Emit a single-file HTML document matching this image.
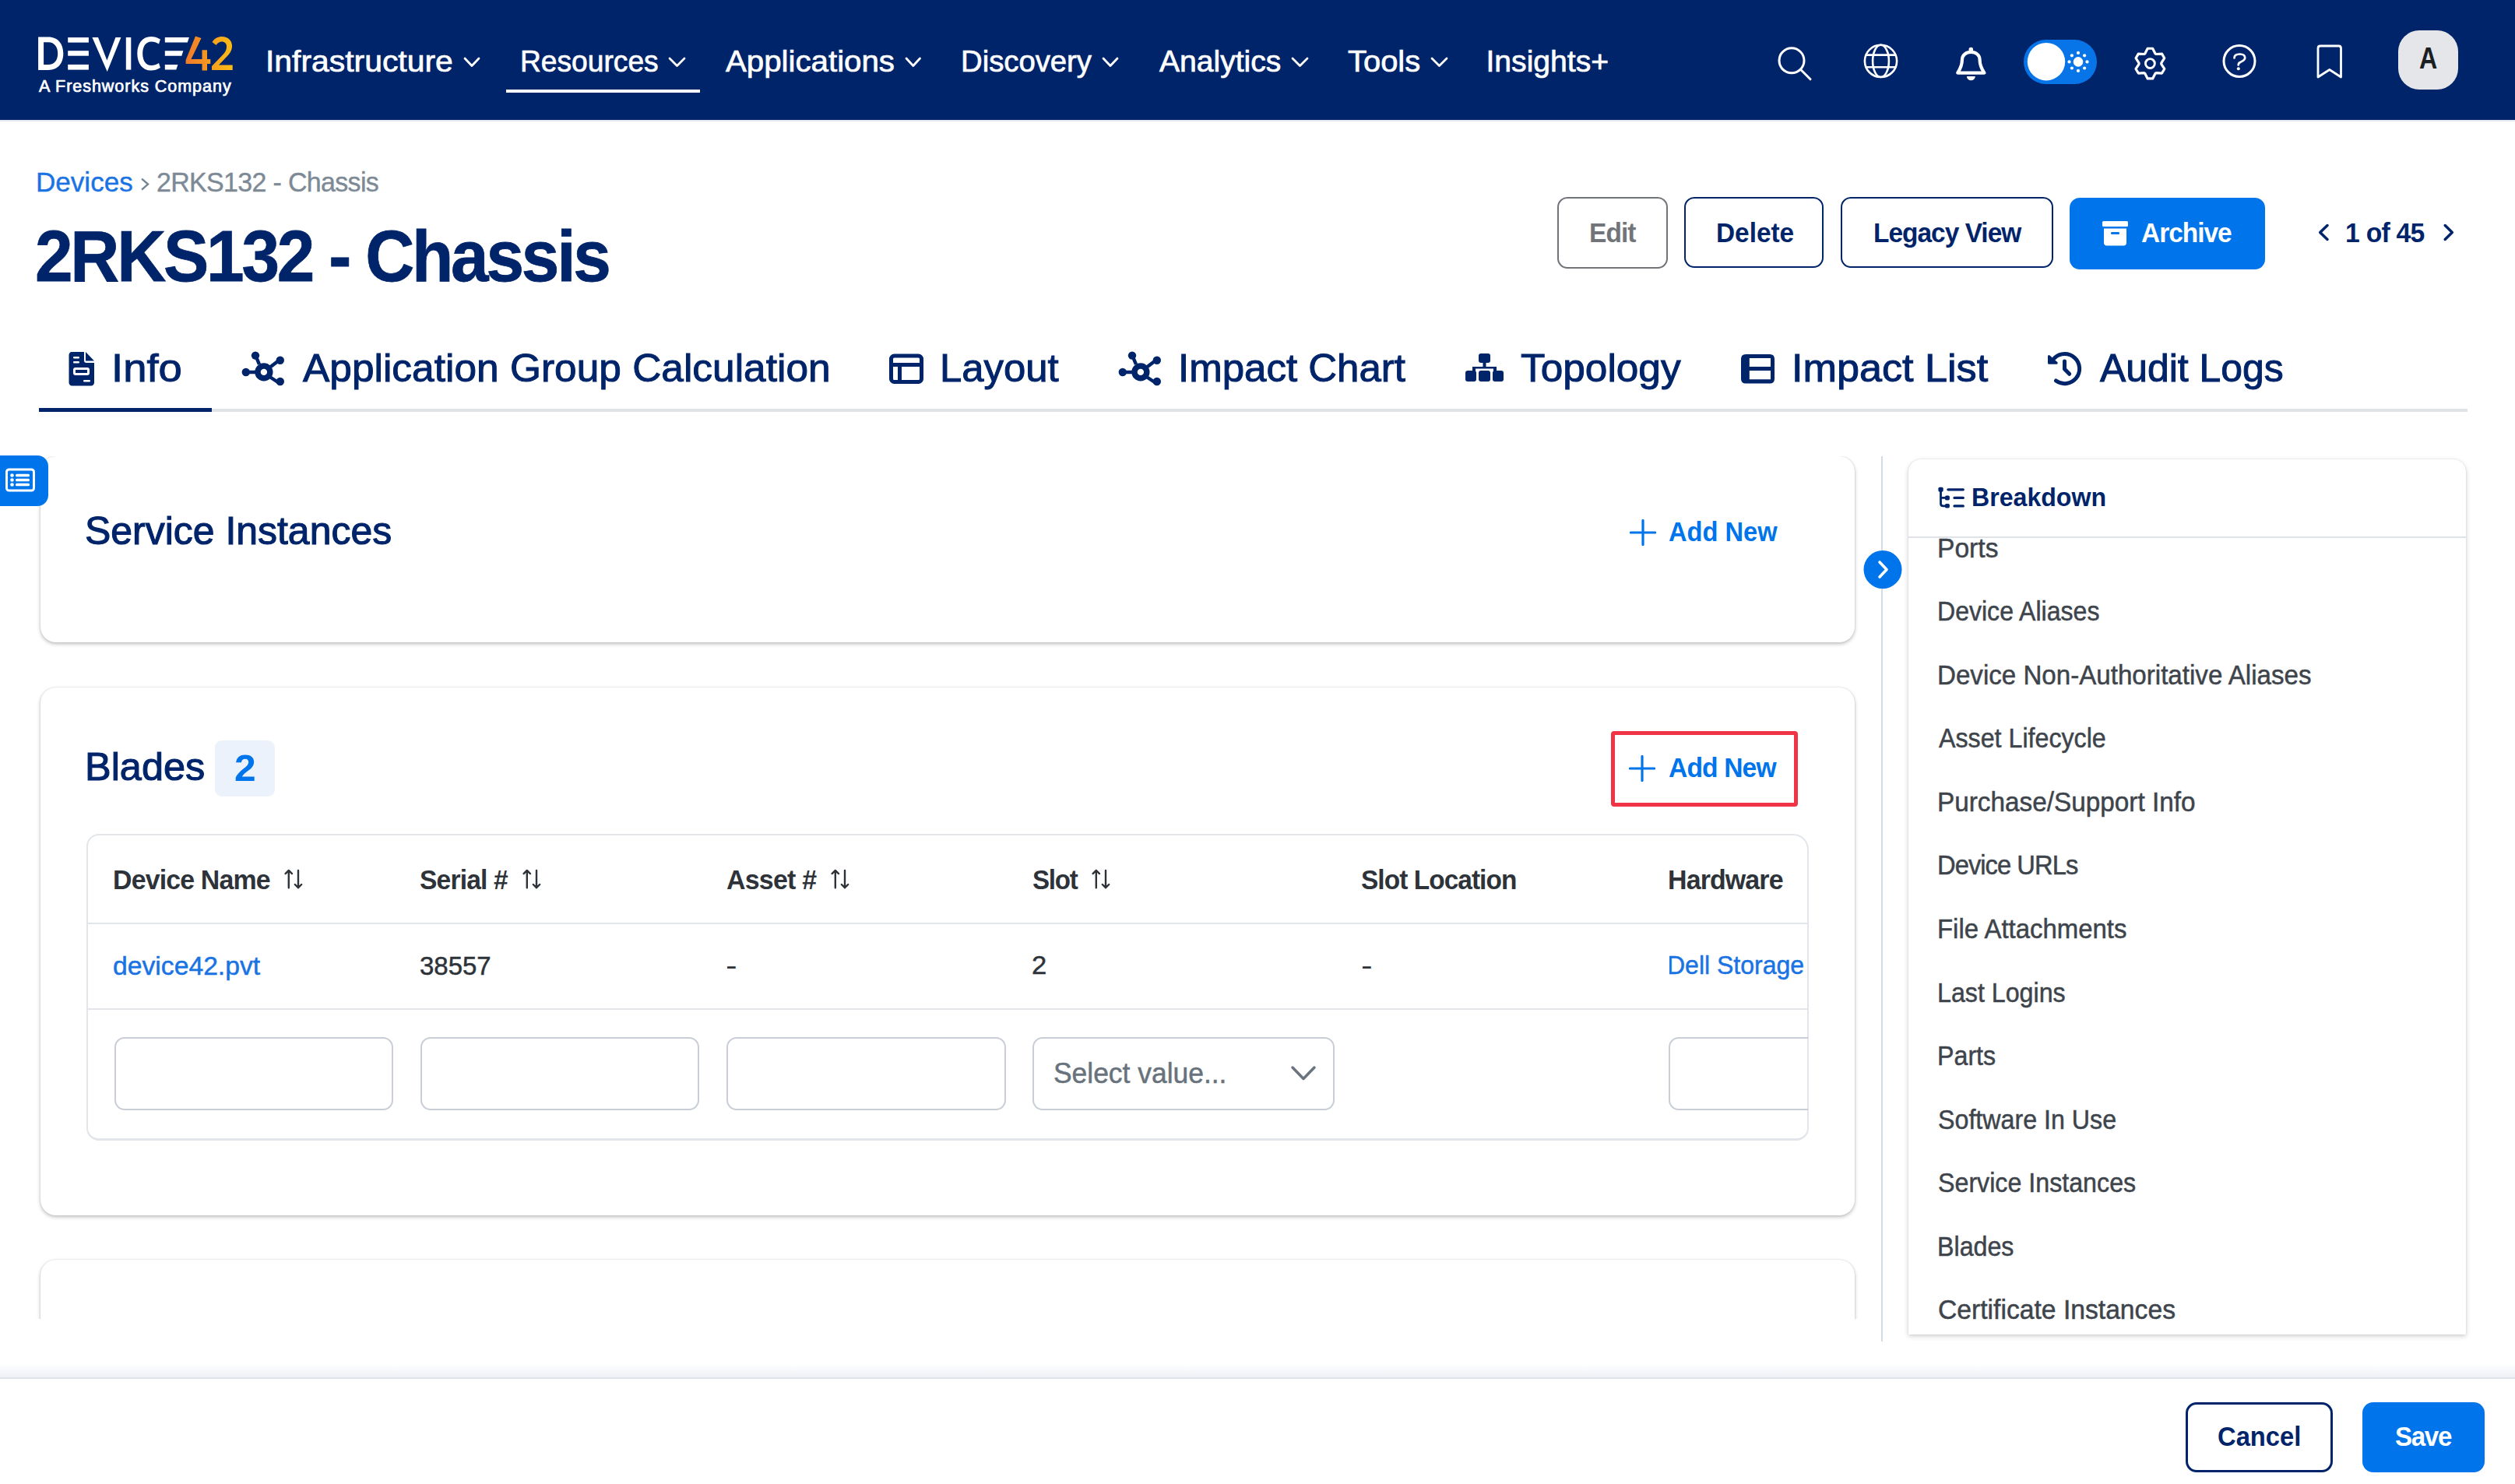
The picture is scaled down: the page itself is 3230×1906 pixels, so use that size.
<!DOCTYPE html>
<html><head><meta charset="utf-8"><title>2RKS132 - Chassis</title>
<style>
html,body{margin:0;padding:0;}
body{width:3230px;height:1906px;position:relative;overflow:hidden;background:#fff;font-family:"Liberation Sans", sans-serif;}
.t{position:absolute;white-space:nowrap;line-height:1;transform-origin:0 0;}
</style></head><body>
<div style="position:absolute;left:0;top:0;width:3230px;height:154px;background:#00246a"></div>
<div style="position:absolute;left:0;top:154px;width:3230px;height:2px;background:#e3e7ee"></div>
<svg style="position:absolute;left:40px;top:40px" width="270" height="90" viewBox="0 0 270 90">
<defs><linearGradient id="og" gradientUnits="userSpaceOnUse" x1="199" x2="259" y1="0" y2="0"><stop offset="0" stop-color="#f07a2a"/><stop offset="1" stop-color="#fbbc14"/></linearGradient></defs>
<g fill="#fff">
<path d="M9.1 7.5 H22 C35 7.5 41.3 17 41.3 28.7 C41.3 40.5 35 49.9 22 49.9 H9.1 Z M16.1 14.3 V43.1 H22 C30 43.1 34.2 37 34.2 28.7 C34.2 20.5 30 14.3 22 14.3 Z"/>
<rect x="47.2" y="8.1" width="26.7" height="6.5"/><rect x="47.2" y="25.2" width="26.7" height="6.5"/><rect x="47.2" y="42.9" width="26.7" height="6.7"/>
<path d="M78.4 8 H86 L97.4 37.5 L108.4 8 H115.4 L97.7 52 Z"/>
<rect x="121.8" y="8" width="6.5" height="41.6"/>
<path d="M165.9 10.5 C162 8 158 7 154 7 C143 7 136.3 16 136.3 28.7 C136.3 41.5 143 50.5 154 50.5 C158 50.5 162 49.5 165.9 47 L164 41 C161 43 158 44 154.5 44 C147 44 143.2 37.5 143.2 28.7 C143.2 20 147 13.5 154.5 13.5 C158 13.5 161 14.5 164 16.5 Z"/>
<path d="M171.8 8.1 H202.9 L200.8 14.6 H171.8 Z"/><path d="M171.8 25.2 H195.4 L193.3 31.7 H171.8 Z"/><path d="M171.8 42.9 H188.4 L186.3 49.6 H171.8 Z"/>
</g>
<g fill="url(#og)">
<path d="M211 6.4 L218.5 9 L205.5 36 H219.5 V24.3 H226 V36 H230.3 V42 H226 V50.5 H219.5 V42 H198.6 V37 Z"/>
<path d="M232.5 14 C235 9.5 240 7 245 7 C253 7 258 12 258 19 C258 25 255 29 250 34 L241 43.5 H258.7 V50 H232 V45 L245.5 31 C249.5 27 251 24 251 19.5 C251 16 248.5 13.5 245 13.5 C242 13.5 239.5 15 237.5 18 Z"/>
</g>
</svg>
<div class="t" style="left:50.0px;top:100.8px;font-size:21.51px;font-weight:400;color:#fff;letter-spacing:0.97px;-webkit-text-stroke:0.7px #fff;">A Freshworks Company</div>
<div class="t" style="left:340.8px;top:59.2px;font-size:39.10px;font-weight:400;color:#fff;transform:scaleX(1.0457);-webkit-text-stroke:0.7px #fff;">Infrastructure</div>
<svg style="position:absolute;left:595.0px;top:72px" width="22.0" height="16" viewBox="0 0 22.0 16"><path d="M2 3 L11.0 12.5 L20.0 3" fill="none" stroke="#fff" stroke-width="2.8" stroke-linecap="round" stroke-linejoin="round"/></svg>
<div class="t" style="left:667.5px;top:59.2px;font-size:39.10px;font-weight:400;color:#fff;transform:scaleX(0.9513);-webkit-text-stroke:0.7px #fff;">Resources</div>
<svg style="position:absolute;left:858.0px;top:72px" width="23.0" height="16" viewBox="0 0 23.0 16"><path d="M2 3 L11.5 12.5 L21.0 3" fill="none" stroke="#fff" stroke-width="2.8" stroke-linecap="round" stroke-linejoin="round"/></svg>
<div class="t" style="left:931.8px;top:59.2px;font-size:39.10px;font-weight:400;color:#fff;transform:scaleX(1.0298);-webkit-text-stroke:0.7px #fff;">Applications</div>
<svg style="position:absolute;left:1162.0px;top:72px" width="21.5" height="16" viewBox="0 0 21.5 16"><path d="M2 3 L10.8 12.5 L19.5 3" fill="none" stroke="#fff" stroke-width="2.8" stroke-linecap="round" stroke-linejoin="round"/></svg>
<div class="t" style="left:1233.9px;top:59.2px;font-size:39.10px;font-weight:400;color:#fff;transform:scaleX(0.9792);-webkit-text-stroke:0.7px #fff;">Discovery</div>
<svg style="position:absolute;left:1415.0px;top:72px" width="22.0" height="16" viewBox="0 0 22.0 16"><path d="M2 3 L11.0 12.5 L20.0 3" fill="none" stroke="#fff" stroke-width="2.8" stroke-linecap="round" stroke-linejoin="round"/></svg>
<div class="t" style="left:1489.0px;top:59.2px;font-size:39.10px;font-weight:400;color:#fff;-webkit-text-stroke:0.7px #fff;">Analytics</div>
<svg style="position:absolute;left:1658.0px;top:72px" width="23.0" height="16" viewBox="0 0 23.0 16"><path d="M2 3 L11.5 12.5 L21.0 3" fill="none" stroke="#fff" stroke-width="2.8" stroke-linecap="round" stroke-linejoin="round"/></svg>
<div class="t" style="left:1731.2px;top:59.2px;font-size:39.10px;font-weight:400;color:#fff;transform:scaleX(1.0210);-webkit-text-stroke:0.7px #fff;">Tools</div>
<svg style="position:absolute;left:1837.0px;top:72px" width="23.0" height="16" viewBox="0 0 23.0 16"><path d="M2 3 L11.5 12.5 L21.0 3" fill="none" stroke="#fff" stroke-width="2.8" stroke-linecap="round" stroke-linejoin="round"/></svg>
<div class="t" style="left:1908.5px;top:59.2px;font-size:39.10px;font-weight:400;color:#fff;-webkit-text-stroke:0.7px #fff;">Insights+</div>
<div style="position:absolute;left:650px;top:115px;width:249px;height:4px;background:#fff"></div>
<svg style="position:absolute;left:2270px;top:45px" width="930" height="70" viewBox="2270 45 930 70">
<g fill="none" stroke="#fff" stroke-width="3" stroke-linecap="round" stroke-linejoin="round">
<circle cx="2301" cy="77.8" r="16"/><path d="M2313.5 90.3 L2325 101.8"/>
<g stroke-width="2.6"><circle cx="2415.5" cy="78.4" r="20.6"/><ellipse cx="2415.5" cy="78.4" rx="10.4" ry="20.6"/><path d="M2397 70.6 H2434 M2397 86.2 H2434"/></g>
<path d="M2514.2 93.6 C2518.5 87 2519.9 83 2519.9 77 C2519.9 70.5 2525 66.9 2531.3 66.9 C2537.6 66.9 2542.6 70.5 2542.6 77 C2542.6 83 2544 87 2548.4 93.6 Z" stroke-width="4.2"/>
<path d="M2754.86 68.77 L2758.17 62.27 L2764.63 62.27 L2767.94 68.77 L2769.24 69.52 L2776.52 69.13 L2779.76 74.74 L2775.78 80.85 L2775.78 82.35 L2779.76 88.46 L2776.52 94.07 L2769.24 93.68 L2767.94 94.43 L2764.63 100.93 L2758.17 100.93 L2754.86 94.43 L2753.56 93.68 L2746.28 94.07 L2743.04 88.46 L2747.02 82.35 L2747.02 80.85 L2743.04 74.74 L2746.28 69.13 L2753.56 69.52 Z" stroke-width="3.2"/>
<circle cx="2761.4" cy="81.6" r="5.95" stroke-width="2.9"/>
<circle cx="2876" cy="78.5" r="20"/>
<path d="M2869.5 74.5 C2869.5 71 2872 69.5 2876.5 69.5 C2881 69.5 2883.2 71.5 2883.2 74.2 C2883.2 77.5 2879.5 78.5 2877 80 C2875 81 2874.7 82 2874.7 83.5" stroke-width="2.7"/>
<path d="M2977 99 V62 Q2977 59 2980 59 H3003.5 Q3006.5 59 3006.5 62 V99 L2991.8 89.5 L2977 99 Z" stroke-width="2.8"/>
</g>
<g fill="#fff">
<circle cx="2531.3" cy="63.6" r="2.8"/><path d="M2525.9 97.9 H2536.8 A5.45 5.45 0 0 1 2525.9 97.9 Z"/>
<circle cx="2874.8" cy="88.3" r="2"/>
</g>
<rect x="2599" y="51" width="94" height="57" rx="28.5" fill="#0774e8"/>
<circle cx="2628" cy="79.2" r="24.2" fill="#fff"/>
<g fill="#fff"><circle cx="2669" cy="79.4" r="6.3"/>
<circle cx="2669" cy="67.9" r="2.1"/><circle cx="2669" cy="90.9" r="2.1"/><circle cx="2657.5" cy="79.4" r="2.1"/><circle cx="2680.5" cy="79.4" r="2.1"/>
<circle cx="2660.9" cy="71.3" r="2.1"/><circle cx="2677.1" cy="71.3" r="2.1"/><circle cx="2660.9" cy="87.5" r="2.1"/><circle cx="2677.1" cy="87.5" r="2.1"/></g>

</svg>
<div style="position:absolute;left:3080px;top:39px;width:77px;height:76px;border-radius:27px;background:#e5e6ea"></div>
<div class="t" style="left:3106.7px;top:56.4px;font-size:38.23px;font-weight:700;color:#1b1f22;transform:scaleX(0.8425);">A</div>
<div class="t" style="left:45.5px;top:215.6px;font-size:35.32px;font-weight:400;color:#1a73e3;transform:scaleX(0.9929);-webkit-text-stroke:0.4px #1a73e3;">Devices</div>
<svg style="position:absolute;left:176px;top:224px" width="20" height="26" viewBox="176 224 20 26"><path d="M183 230.5 L190 236.6 L183 242.8" fill="none" stroke="#748592" stroke-width="2.4" stroke-linecap="square"/></svg>
<div class="t" style="left:201.3px;top:215.6px;font-size:35.32px;font-weight:400;color:#7d8a95;letter-spacing:-0.71px;transform:scaleX(0.9629);-webkit-text-stroke:0.4px #7d8a95;">2RKS132 - Chassis</div>
<div class="t" style="left:45.4px;top:281.9px;font-size:93.46px;font-weight:700;color:#00246a;letter-spacing:-3.44px;transform:scaleX(0.9345);-webkit-text-stroke:0.8px #00246a;">2RKS132 - Chassis</div>
<div style="position:absolute;left:2000px;top:253.2px;width:137.8px;height:87.4px;border:2.6px solid #707378;background:#fff;border-radius:13px"></div>
<div style="position:absolute;left:2162.5px;top:253.2px;width:175.9px;height:87.0px;border:2.8px solid #00246a;background:#fff;border-radius:13px"></div>
<div style="position:absolute;left:2364px;top:253.2px;width:268.9px;height:87.0px;border:2.8px solid #00246a;background:#fff;border-radius:13px"></div>
<div style="position:absolute;left:2658px;top:253.5px;width:251px;height:92px;background:#0074ea;border-radius:13px"></div>
<div class="t" style="left:2040.8px;top:281.2px;font-size:35.17px;font-weight:700;color:#717478;letter-spacing:-1.00px;transform:scaleX(0.9530);">Edit</div>
<div class="t" style="left:2203.8px;top:281.2px;font-size:35.17px;font-weight:700;color:#00246a;transform:scaleX(0.9492);">Delete</div>
<div class="t" style="left:2405.8px;top:281.2px;font-size:35.17px;font-weight:700;color:#00246a;letter-spacing:-1.03px;transform:scaleX(0.9508);">Legacy View</div>
<div class="t" style="left:2750.3px;top:281.2px;font-size:35.17px;font-weight:700;color:#fff;letter-spacing:-1.05px;transform:scaleX(0.9507);">Archive</div>
<svg style="position:absolute;left:2698px;top:283px" width="38" height="34" viewBox="0 0 38 34">
<rect x="2" y="1" width="33" height="7" rx="1.5" fill="#fff"/><path d="M4 10.5 H33 V29 C33 31 31.5 32.5 29.5 32.5 H7.5 C5.5 32.5 4 31 4 29 Z" fill="#fff"/>
<rect x="13" y="15" width="11" height="3" rx="1.2" fill="#0774e8"/></svg>
<div class="t" style="left:3011.5px;top:281.2px;font-size:35.17px;font-weight:700;color:#00246a;letter-spacing:-0.76px;transform:scaleX(0.9581);">1 of 45</div>
<svg style="position:absolute;left:2970px;top:280px" width="190" height="36" viewBox="2970 280 190 36"><g fill="none" stroke="#00246a" stroke-width="3.5" stroke-linecap="round" stroke-linejoin="round"><path d="M2989 289.5 L2979.7 298.5 L2989 307.5"/><path d="M3140.2 289.5 L3149.3 298.5 L3140.2 307.5"/></g></svg>
<div style="position:absolute;left:50px;top:525px;width:3119px;height:4px;background:#dfe2e7"></div>
<div style="position:absolute;left:50px;top:524px;width:222px;height:5px;background:#00246a"></div>
<div class="t" style="left:143.1px;top:447.6px;font-size:50.15px;font-weight:400;color:#00246a;transform:scaleX(1.0861);-webkit-text-stroke:1px #00246a;">Info</div>
<div class="t" style="left:388.5px;top:447.6px;font-size:50.15px;font-weight:400;color:#00246a;transform:scaleX(1.0258);-webkit-text-stroke:1px #00246a;">Application Group Calculation</div>
<div class="t" style="left:1207.4px;top:447.6px;font-size:50.15px;font-weight:400;color:#00246a;transform:scaleX(1.0143);-webkit-text-stroke:1px #00246a;">Layout</div>
<div class="t" style="left:1513.2px;top:447.6px;font-size:50.15px;font-weight:400;color:#00246a;transform:scaleX(1.0171);-webkit-text-stroke:1px #00246a;">Impact Chart</div>
<div class="t" style="left:1953.0px;top:447.6px;font-size:50.15px;font-weight:400;color:#00246a;transform:scaleX(1.0244);-webkit-text-stroke:1px #00246a;">Topology</div>
<div class="t" style="left:2301.0px;top:447.6px;font-size:50.15px;font-weight:400;color:#00246a;transform:scaleX(1.0400);-webkit-text-stroke:1px #00246a;">Impact List</div>
<div class="t" style="left:2697.0px;top:447.6px;font-size:50.15px;font-weight:400;color:#00246a;transform:scaleX(0.9949);-webkit-text-stroke:1px #00246a;">Audit Logs</div>
<svg style="position:absolute;left:80px;top:440px" width="2620" height="70" viewBox="80 440 2620 70">
<g fill="#00246a">
<path d="M92 452 H108 V463 C108 465 109 466 111 466 H121 V491.5 C121 493.8 119.3 495.5 117 495.5 H92.5 C90.2 495.5 88.5 493.8 88.5 491.5 V456 C88.5 453.8 90 452 92 452 Z"/>
<path d="M110 452 L121 463.5 H110 Z"/>
</g>
<g fill="#fff"><rect x="94" y="458" width="8" height="2.6" rx="1.3"/><rect x="94" y="464" width="8" height="2.6" rx="1.3"/>
<rect x="94" y="472" width="21" height="10" rx="3"/><rect x="107" y="488" width="9" height="2.6" rx="1.3"/></g>
<rect x="97" y="475" width="15" height="4" fill="#00246a"/>
<g id="hub"><g stroke="#00246a" stroke-width="4.5" fill="none"><circle cx="338.9" cy="477.9" r="7.9" stroke-width="7.4"/>
<path d="M333 468 L328 456 M347 471.5 L360 461.5 M329.5 478 L315.5 478 M346.5 484 L360 493"/></g>
<g fill="#00246a"><circle cx="328" cy="456.6" r="5.2"/><circle cx="359.8" cy="462.7" r="5.2"/><circle cx="315.8" cy="478" r="5.2"/><circle cx="359.8" cy="490" r="5.2"/></g></g>
<use href="#hub" x="1126" y="0"/>
<g fill="none" stroke="#00246a" stroke-width="5"><rect x="1144.5" y="457" width="39" height="33.5" rx="4"/><path d="M1144.5 468.5 H1183.5 M1155.5 468.5 V490.5"/></g>
<g fill="#00246a"><rect x="1899" y="454" width="15" height="12" rx="3"/><path d="M1904.5 465 H1908.5 V471 H1922 V477 H1918 V473.5 H1895 V477 H1891 V471 H1904.5 Z"/>
<rect x="1882" y="476" width="14" height="14" rx="3"/><rect x="1899" y="476" width="15" height="14" rx="3"/><rect x="1917" y="476" width="14" height="14" rx="3"/></g>
<path fill-rule="evenodd" fill="#00246a" d="M2242 455 H2273 Q2279 455 2279 461 V486.5 Q2279 492.5 2273 492.5 H2242 Q2236 492.5 2236 486.5 V461 Q2236 455 2242 455 Z M2246.8 460 H2274 V471 H2246.8 Z M2246.8 476.1 H2274 V487.3 H2246.8 Z"/>
<g fill="none" stroke="#00246a" stroke-width="5" stroke-linecap="round" stroke-linejoin="round"><path d="M2638.5 459.9 A19 19 0 1 1 2640.5 489"/><path d="M2651.5 464 V474 L2657.7 480.3"/></g>
<path d="M2631.5 457.5 V466.2 H2641.2 Z" fill="#00246a" stroke="#00246a" stroke-width="3" stroke-linejoin="round"/>
</g></svg>
<div style="position:absolute;left:0;top:585px;width:62px;height:65px;background:#0074ea;border-radius:0 14px 14px 0;z-index:5"></div>
<svg style="position:absolute;left:0;top:585px;z-index:6" width="62" height="65" viewBox="0 585 62 65"><rect x="8.5" y="603" width="35" height="27" rx="3" fill="none" stroke="#fff" stroke-width="3"/>
<g fill="#fff"><circle cx="15.5" cy="610.5" r="2.3"/><circle cx="15.5" cy="616.5" r="2.3"/><circle cx="15.5" cy="622.5" r="2.3"/>
<rect x="20" y="608.8" width="18" height="3.4" rx="1.5"/><rect x="20" y="614.8" width="18" height="3.4" rx="1.5"/><rect x="20" y="620.8" width="18" height="3.4" rx="1.5"/></g></svg>
<div style="position:absolute;left:0;top:586px;width:2400px;height:1108px;overflow:hidden">
<div style="position:absolute;left:52px;top:0px;width:2330px;height:238.5px;background:#fff;border-radius:20px;box-shadow:0 2px 5px rgba(0,0,0,0.26), 0 0 2px rgba(0,0,0,0.12);"></div>
<div style="position:absolute;left:52px;top:297px;width:2330px;height:677.5px;background:#fff;border-radius:20px;box-shadow:0 2px 5px rgba(0,0,0,0.26), 0 0 2px rgba(0,0,0,0.12);"></div>
<div style="position:absolute;left:52px;top:1031.7px;width:2330px;height:300px;background:#fff;border-radius:20px;box-shadow:0 2px 5px rgba(0,0,0,0.26), 0 0 2px rgba(0,0,0,0.12);"></div>
</div>
<div class="t" style="left:108.6px;top:657.2px;font-size:49.42px;font-weight:400;color:#00246a;transform:scaleX(1.0107);-webkit-text-stroke:1.1px #00246a;">Service Instances</div>
<svg style="position:absolute;left:2092.5px;top:667px" width="34" height="34" viewBox="0 0 34 34"><path d="M17 1.5 V32.5 M1.5 17 H32.5" stroke="#0074ea" stroke-width="3.2" stroke-linecap="round"/></svg>
<div class="t" style="left:2142.8px;top:665.5px;font-size:34.88px;font-weight:700;color:#0074ea;transform:scaleX(0.9354);">Add New</div>
<div class="t" style="left:109.0px;top:959.9px;font-size:50.87px;font-weight:400;color:#00246a;transform:scaleX(0.9920);-webkit-text-stroke:1.1px #00246a;">Blades</div>
<div style="position:absolute;left:276px;top:951px;width:77px;height:72px;background:#ecf2fb;border-radius:9px"></div>
<div class="t" style="left:300.5px;top:962.0px;font-size:48.40px;font-weight:700;color:#0074ea;transform:scaleX(1.0288);">2</div>
<div style="position:absolute;left:2068.5px;top:939px;width:230.5px;height:87px;border:5px solid #f03345;border-radius:4px"></div>
<svg style="position:absolute;left:2092px;top:970px" width="34" height="34" viewBox="0 0 34 34"><path d="M17 1.5 V32.5 M1.5 17 H32.5" stroke="#0074ea" stroke-width="3.2" stroke-linecap="round"/></svg>
<div class="t" style="left:2143.3px;top:969.2px;font-size:34.88px;font-weight:700;color:#0074ea;letter-spacing:-0.90px;transform:scaleX(0.9637);">Add New</div>
<div style="position:absolute;left:111px;top:1071px;width:2211.7px;height:394px;border:2px solid #e2e5e9;border-bottom-width:3px;border-radius:16px;border-top-right-radius:20px;box-sizing:border-box;overflow:hidden">
</div>
<div style="position:absolute;left:113px;top:1184.5px;width:2209px;height:2px;background:#e2e5e9"></div>
<div style="position:absolute;left:113px;top:1295px;width:2209px;height:2px;background:#e2e5e9"></div>
<div class="t" style="left:144.8px;top:1111.6px;font-size:35.32px;font-weight:700;color:#2d3339;letter-spacing:-0.87px;transform:scaleX(0.9599);">Device Name</div>
<div class="t" style="left:539.2px;top:1111.6px;font-size:35.32px;font-weight:700;color:#2d3339;letter-spacing:-0.87px;transform:scaleX(0.9510);">Serial #</div>
<div class="t" style="left:932.7px;top:1111.6px;font-size:35.32px;font-weight:700;color:#2d3339;letter-spacing:-0.80px;transform:scaleX(0.9613);">Asset #</div>
<div class="t" style="left:1326.0px;top:1111.6px;font-size:35.32px;font-weight:700;color:#2d3339;letter-spacing:-1.37px;transform:scaleX(0.9375);">Slot</div>
<div class="t" style="left:1748.2px;top:1111.6px;font-size:35.32px;font-weight:700;color:#2d3339;letter-spacing:-0.99px;transform:scaleX(0.9461);">Slot Location</div>
<div class="t" style="left:2141.5px;top:1111.6px;font-size:35.32px;font-weight:700;color:#2d3339;letter-spacing:-0.89px;transform:scaleX(0.9603);">Hardware</div>
<svg style="position:absolute;left:355.1px;top:1105px" width="36" height="42" viewBox="0 0 36 42"><g fill="none" stroke="#2d3339" stroke-width="2.4" stroke-linecap="round" stroke-linejoin="round"><path d="M15.8 35.2 V12.9 M11.6 17.1 L15.8 12.9 L20 17.1"/><path d="M28 12.9 V35.2 M23.8 31 L28 35.2 L32.2 31"/></g></svg>
<svg style="position:absolute;left:660.5px;top:1105px" width="36" height="42" viewBox="0 0 36 42"><g fill="none" stroke="#2d3339" stroke-width="2.4" stroke-linecap="round" stroke-linejoin="round"><path d="M15.8 35.2 V12.9 M11.6 17.1 L15.8 12.9 L20 17.1"/><path d="M28 12.9 V35.2 M23.8 31 L28 35.2 L32.2 31"/></g></svg>
<svg style="position:absolute;left:1056.5px;top:1105px" width="36" height="42" viewBox="0 0 36 42"><g fill="none" stroke="#2d3339" stroke-width="2.4" stroke-linecap="round" stroke-linejoin="round"><path d="M15.8 35.2 V12.9 M11.6 17.1 L15.8 12.9 L20 17.1"/><path d="M28 12.9 V35.2 M23.8 31 L28 35.2 L32.2 31"/></g></svg>
<svg style="position:absolute;left:1392.0px;top:1105px" width="36" height="42" viewBox="0 0 36 42"><g fill="none" stroke="#2d3339" stroke-width="2.4" stroke-linecap="round" stroke-linejoin="round"><path d="M15.8 35.2 V12.9 M11.6 17.1 L15.8 12.9 L20 17.1"/><path d="M28 12.9 V35.2 M23.8 31 L28 35.2 L32.2 31"/></g></svg>
<div class="t" style="left:144.7px;top:1223.0px;font-size:34.01px;font-weight:400;color:#1a73e3;transform:scaleX(0.9910);-webkit-text-stroke:0.5px #1a73e3;">device42.pvt</div>
<div class="t" style="left:538.8px;top:1223.0px;font-size:34.01px;font-weight:400;color:#2d3339;transform:scaleX(0.9693);-webkit-text-stroke:0.5px #2d3339;">38557</div>
<div class="t" style="left:932.2px;top:1222.5px;font-size:34.88px;font-weight:400;color:#2d3339;transform:scaleX(1.2613);">-</div>
<div class="t" style="left:1325.1px;top:1223.3px;font-size:33.72px;font-weight:400;color:#2d3339;transform:scaleX(1.0250);-webkit-text-stroke:0.5px #2d3339;">2</div>
<div class="t" style="left:1748.2px;top:1222.5px;font-size:34.88px;font-weight:400;color:#2d3339;transform:scaleX(1.2613);">-</div>
<div style="position:absolute;left:2143.7px;top:1200px;width:178px;height:80px;overflow:hidden"><div class="t" style="left:-2.6px;top:22.4px;font-size:34.01px;font-weight:400;color:#1a73e3;transform:scaleX(0.9413);-webkit-text-stroke:0.5px #1a73e3;">Dell Storage</div></div>
<div style="position:absolute;left:146.8px;top:1331.5px;width:358.2px;height:94.5px;border:2px solid #c9ced6;border-radius:13px;box-sizing:border-box;background:#fff"></div>
<div style="position:absolute;left:540px;top:1331.5px;width:358.3px;height:94.5px;border:2px solid #c9ced6;border-radius:13px;box-sizing:border-box;background:#fff"></div>
<div style="position:absolute;left:933.4px;top:1331.5px;width:358.6px;height:94.5px;border:2px solid #c9ced6;border-radius:13px;box-sizing:border-box;background:#fff"></div>
<div style="position:absolute;left:1326px;top:1331.5px;width:388.0px;height:94.5px;border:2px solid #c9ced6;border-radius:13px;box-sizing:border-box;background:#fff"></div>
<div style="position:absolute;left:2142.8px;top:1331.5px;width:179.7px;height:94.5px;overflow:hidden"><div style="width:300px;height:94.5px;border:2px solid #c9ced6;border-radius:13px;box-sizing:border-box"></div></div>
<div class="t" style="left:1353.4px;top:1360.5px;font-size:36.05px;font-weight:400;color:#68727c;transform:scaleX(0.9823);-webkit-text-stroke:0.5px #68727c;">Select value...</div>
<svg style="position:absolute;left:1657px;top:1368px" width="34" height="21" viewBox="0 0 34 21"><path d="M3 3 L17 17.5 L31 3" fill="none" stroke="#6a747e" stroke-width="3.5" stroke-linecap="round" stroke-linejoin="round"/></svg>
<div style="position:absolute;left:2416px;top:586px;width:2px;height:1137px;background:#d5dbe3"></div>
<svg style="position:absolute;left:2393px;top:706px" width="50" height="52" viewBox="0 0 50 52"><circle cx="25" cy="25.5" r="24.5" fill="#0074ea"/><path d="M21 16 L30 25.5 L21 35" fill="none" stroke="#fff" stroke-width="3.6" stroke-linecap="round" stroke-linejoin="round"/></svg>
<div style="position:absolute;left:2451px;top:590px;width:716px;height:1123.5px;background:#fff;border-radius:16px 16px 0 0;box-shadow:0 2px 6px rgba(0,0,0,0.20), 0 0 2px rgba(0,0,0,0.10)"></div>
<div style="position:absolute;left:2451px;top:689px;width:716px;height:2px;background:#dfe3e8"></div>
<svg style="position:absolute;left:2486px;top:622px" width="40" height="34" viewBox="0 0 40 34">
<g fill="none" stroke="#00246a" stroke-width="2.8" stroke-linecap="round"><path d="M6.5 9 V24.7 Q6.5 27.8 9.6 27.8 H13 M6.5 17.4 H13"/></g>
<g fill="none" stroke="#00246a" stroke-width="3.3" stroke-linecap="round"><path d="M15.9 6.8 H35.3 M24 17.4 H35.3 M24 27.9 H35.3"/></g>
<g fill="#00246a"><rect x="3.4" y="3.8" width="6.3" height="6" rx="1.8"/><rect x="11.9" y="14.6" width="6" height="5.9" rx="1.8"/><rect x="11.9" y="25" width="6" height="5.6" rx="1.8"/></g></svg>
<div class="t" style="left:2532.4px;top:622.2px;font-size:33.72px;font-weight:700;color:#00246a;transform:scaleX(0.9520);">Breakdown</div>
<div style="position:absolute;left:2451px;top:691px;width:716px;height:1022.5px;overflow:hidden">
<div class="t" style="left:36.7px;top:-4.4px;font-size:34.45px;font-weight:400;color:#3e444b;transform:scaleX(0.9759);-webkit-text-stroke:0.5px #3e444b;">Ports</div>
<div class="t" style="left:36.8px;top:77.2px;font-size:34.45px;font-weight:400;color:#3e444b;transform:scaleX(0.9308);-webkit-text-stroke:0.5px #3e444b;">Device Aliases</div>
<div class="t" style="left:36.7px;top:158.7px;font-size:34.45px;font-weight:400;color:#3e444b;transform:scaleX(0.9617);-webkit-text-stroke:0.5px #3e444b;">Device Non-Authoritative Aliases</div>
<div class="t" style="left:39.4px;top:240.3px;font-size:34.45px;font-weight:400;color:#3e444b;transform:scaleX(0.9350);-webkit-text-stroke:0.5px #3e444b;">Asset Lifecycle</div>
<div class="t" style="left:36.7px;top:321.8px;font-size:34.45px;font-weight:400;color:#3e444b;transform:scaleX(0.9675);-webkit-text-stroke:0.5px #3e444b;">Purchase/Support Info</div>
<div class="t" style="left:36.8px;top:403.4px;font-size:34.45px;font-weight:400;color:#3e444b;letter-spacing:-1.00px;transform:scaleX(0.9494);-webkit-text-stroke:0.5px #3e444b;">Device URLs</div>
<div class="t" style="left:36.8px;top:484.9px;font-size:34.45px;font-weight:400;color:#3e444b;transform:scaleX(0.9565);-webkit-text-stroke:0.5px #3e444b;">File Attachments</div>
<div class="t" style="left:36.8px;top:566.5px;font-size:34.45px;font-weight:400;color:#3e444b;transform:scaleX(0.9350);-webkit-text-stroke:0.5px #3e444b;">Last Logins</div>
<div class="t" style="left:36.8px;top:648.0px;font-size:34.45px;font-weight:400;color:#3e444b;transform:scaleX(0.9350);-webkit-text-stroke:0.5px #3e444b;">Parts</div>
<div class="t" style="left:38.0px;top:729.6px;font-size:34.45px;font-weight:400;color:#3e444b;transform:scaleX(0.9350);-webkit-text-stroke:0.5px #3e444b;">Software In Use</div>
<div class="t" style="left:38.0px;top:811.1px;font-size:34.45px;font-weight:400;color:#3e444b;transform:scaleX(0.9350);-webkit-text-stroke:0.5px #3e444b;">Service Instances</div>
<div class="t" style="left:36.8px;top:892.7px;font-size:34.45px;font-weight:400;color:#3e444b;transform:scaleX(0.9350);-webkit-text-stroke:0.5px #3e444b;">Blades</div>
<div class="t" style="left:37.7px;top:974.2px;font-size:34.45px;font-weight:400;color:#3e444b;transform:scaleX(0.9775);-webkit-text-stroke:0.5px #3e444b;">Certificate Instances</div>
</div>
<div style="position:absolute;left:0;top:1752px;width:3230px;height:18px;background:linear-gradient(to bottom, rgba(220,225,235,0), rgba(220,225,235,0.55))"></div>
<div style="position:absolute;left:0;top:1769px;width:3230px;height:2px;background:#dfe4ec"></div>
<div style="position:absolute;left:2806.5px;top:1800.5px;width:183.0px;height:84.5px;border:3px solid #00246a;background:#fff;border-radius:14px"></div>
<div style="position:absolute;left:3034.3px;top:1800.5px;width:156.7px;height:90.5px;background:#0074ea;border-radius:14px"></div>
<div class="t" style="left:2847.7px;top:1828.3px;font-size:34.88px;font-weight:700;color:#00246a;transform:scaleX(0.9382);">Cancel</div>
<div class="t" style="left:3076.2px;top:1828.3px;font-size:34.88px;font-weight:700;color:#fff;letter-spacing:-1.37px;transform:scaleX(0.9483);">Save</div>
</body></html>
